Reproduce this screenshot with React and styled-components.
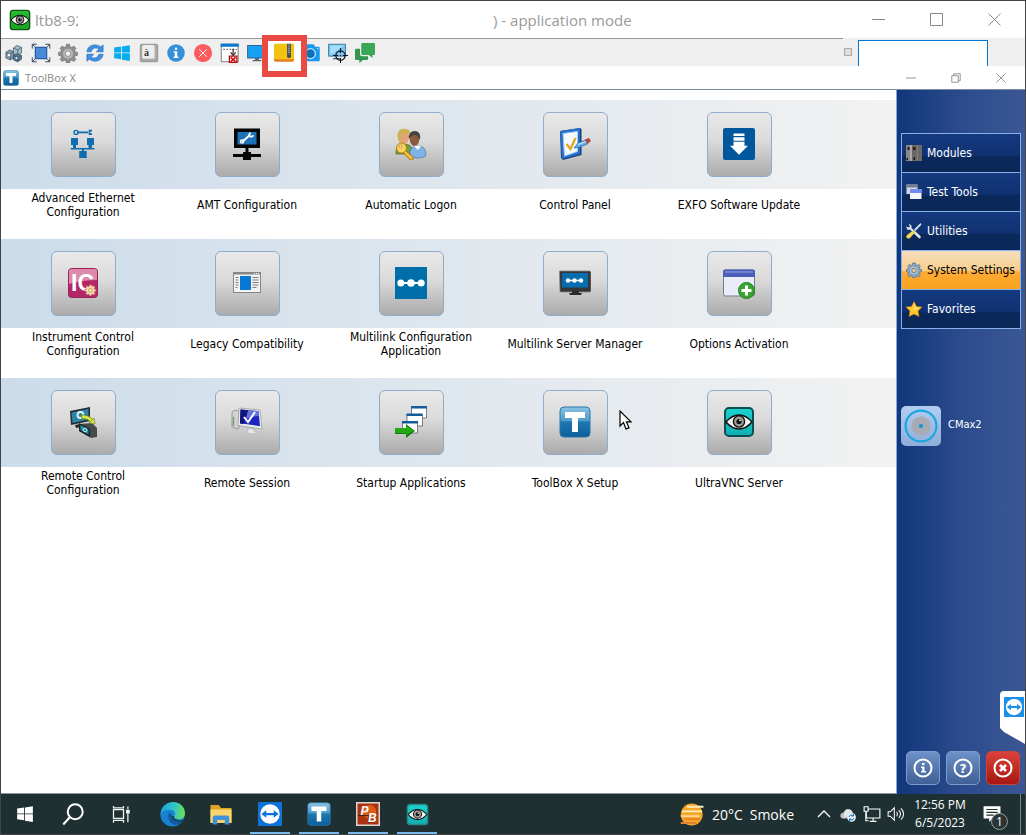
import { useId } from "react";
import styled, { createGlobalStyle, css } from "styled-components";

const GlobalStyle = createGlobalStyle`
  * {
    box-sizing: border-box;
  }

  body {
    margin: 0;
    background: #fff;
    font-family: "DejaVu Sans Condensed", "Noto Sans", sans-serif;
  }

  button {
    padding: 0;
    border: none;
    background: none;
    color: inherit;
    font: inherit;
    cursor: pointer;
  }

  svg {
    display: block;
    flex: none;
  }
`;

/* ---------- shared drawings ---------- */

function Svg({ size = 32, children, ...rest }) {
  return (
    <svg width={size} height={size} viewBox="0 0 32 32" fill="none" aria-hidden="true" {...rest}>
      {children}
    </svg>
  );
}

function EyeIcon({ size, from = "#19d3cf", to = "#12aeb0", edge = "#0c4f52" }) {
  const id = useId();
  return (
    <Svg size={size}>
      <linearGradient id={id} x1="0" y1="0" x2="0" y2="1">
        <stop offset="0" stopColor={from} />
        <stop offset="1" stopColor={to} />
      </linearGradient>
      <rect x="2" y="2" width="28" height="28" rx="4" fill={`url(#${id})`} stroke={edge} strokeWidth="2" />
      <path d="M3 16Q9 9 16 9t13 7q-6 7-13 7T3 16Z" fill="#f2f6f5" stroke="#111" strokeWidth="1.6" />
      <circle cx="16" cy="15.5" r="5.6" fill="#a29c9a" stroke="#111" strokeWidth="1.4" />
      <circle cx="16" cy="15.5" r="2.6" fill="#111" />
      <circle cx="17" cy="14.3" r=".9" fill="#fff" />
    </Svg>
  );
}

function ToolBoxIcon({ size }) {
  const id = useId();
  return (
    <Svg size={size}>
      <linearGradient id={id} x1="0" y1="0" x2="0" y2="1">
        <stop offset="0" stopColor="#8dc3e2" />
        <stop offset=".45" stopColor="#4b9bcb" />
        <stop offset=".5" stopColor="#1d77b0" />
        <stop offset="1" stopColor="#0c5f9b" />
      </linearGradient>
      <rect x="1" y="1" width="30" height="30" rx="4" fill={`url(#${id})`} stroke="#2a78ab" />
      <path d="M6 6h20v6h-7v14h-6V12H6Z" fill="#fff" />
    </Svg>
  );
}

function TeamViewerIcon({ size, color = "#0e72d8" }) {
  return (
    <Svg size={size}>
      <rect width="32" height="32" rx="1" fill={color} />
      <circle cx="16" cy="16" r="13" fill="#fff" />
      <path d="M4.500 16l6.500-5v3.500h10V11l6.500 5-6.500 5v-3.500H11V21Z" fill={color} />
    </Svg>
  );
}

function WindowsLogo({ size, color }) {
  return (
    <Svg size={size}>
      <path
        d="M2 6.300 14.500 4.500V15H2ZM16 4.300 30 2v13H16ZM2 16.600h12.500v10.600L2 25.500ZM16 16.600h14V30l-14-2.200Z"
        fill={color}
      />
    </Svg>
  );
}

const gearPath =
  "M13.500 2h5l.8 4 2.600 1.100L25.300 4.800l3.400 3.500-2.300 3.400 1.100 2.600 4 .8v4.300l-4 .9-1.100 2.500 2.300 3.400-3.400 3.500-3.400-2.300-2.600 1.100-.8 3.500h-5l-.8-3.500-2.600-1.100-3.400 2.300-3.400-3.500 2.300-3.400-1.100-2.500-4-.9v-4.300l4-.8 1.100-2.600-2.300-3.400 3.400-3.500 3.400 2.300L12.700 6Z";

/* ---------- viewer toolbar drawings ---------- */

const HostsIcon = () => (
  <Svg size={20}>
    <g stroke="#3b5263" strokeWidth="1.200">
      <path d="m3 15 6-4 7 3v9l-6 4-7-3Z" fill="#7f9bab" />
      <path d="m3 15 7 3 6-4M10 18v9" />
      <path d="m15 8 6-4 7 3v9l-6 4-7-3Z" fill="#a9c0cc" />
      <path d="m15 8 7 3 6-4M22 11v9" />
      <path d="m15 20 6-3 7 3v6l-6 4-7-3Z" fill="#53788f" />
      <path d="m15 20 7 3 6-3M22 23v7" />
    </g>
    <circle cx="8" cy="19" r="2" fill="#fff" />
    <circle cx="20" cy="24" r="1.800" fill="#d8edf8" />
  </Svg>
);

const FullScreenIcon = () => (
  <Svg size={20}>
    <rect x="7" y="7" width="18" height="18" fill="#4a8bd6" stroke="#2a5ca5" strokeWidth="2" />
    <path d="M2 9V2h7M23 2h7v7M30 23v7h-7M9 30H2v-7M2 2l4 4M30 2l-4 4M30 30l-4-4M2 30l4-4" stroke="#34475d" strokeWidth="1.600" />
  </Svg>
);

const OptionsGearIcon = () => (
  <Svg size={20}>
    <path d={gearPath} fill="#8d8f90" stroke="#636668" strokeWidth="1" />
    <circle cx="16" cy="17" r="8" fill="#b7b9ba" />
    <circle cx="16" cy="17" r="4.500" fill="#efefef" stroke="#676767" />
  </Svg>
);

const RefreshIcon = () => (
  <Svg size={20}>
    <path d="M3 14C4 7 9 3 16 3c4 0 7 1.500 9 3l4-3v11H18l4-4c-4-4-11-2-12 4Z" fill="#3e90e2" stroke="#2869b5" />
    <path d="M29 18c-1 7-6 11-13 11-4 0-7-1.500-9-3l-4 3V18h11l-4 4c4 4 11 2 12-4Z" fill="#3e90e2" stroke="#2869b5" />
  </Svg>
);

const KeyCapIcon = () => (
  <Svg size={20}>
    <rect x="2" y="2" width="28" height="28" rx="2" fill="#a9a9a9" stroke="#777" />
    <rect x="5" y="3" width="20" height="22" rx="3" fill="#ededed" />
    <text x="8" y="20" fontSize="16" fontWeight="700" fontFamily="Liberation Serif, serif" fill="#333">
      à
    </text>
  </Svg>
);

const StatusIcon = () => (
  <Svg size={20}>
    <circle cx="16" cy="16" r="14" fill="#3490d8" />
    <circle cx="16" cy="9" r="2" fill="#fff" />
    <path d="M12 13h6v9h2v2h-8v-2h2v-7h-2Z" fill="#fff" />
  </Svg>
);

const DisconnectIcon = () => (
  <Svg size={20}>
    <circle cx="16" cy="16" r="14.500" fill="#fd5c5e" />
    <path d="m10 10 12 12m0-12L10 22" stroke="#fff" strokeWidth="1.600" />
  </Svg>
);

const HideBarIcon = () => (
  <Svg size={20}>
    <rect x="2" y="2" width="27" height="28" fill="#fff" stroke="#777" strokeWidth="1.500" />
    <path d="M1 1h29v5H1Z" fill="#0878d0" />
    <path d="M5 10h22" stroke="#777" strokeWidth="2" strokeDasharray="3 2" />
    <path d="M21 9v8m-4-2 4 5 4-5" stroke="#333" strokeWidth="2" />
    <rect x="15" y="21" width="12" height="10" fill="#fff" stroke="#b30b0b" strokeWidth="2" />
    <path d="m17 23 8 7m0-7-8 7" stroke="#e00000" strokeWidth="2.500" />
  </Svg>
);

const MonitorIcon = () => (
  <Svg size={20}>
    <rect x="1" y="4" width="30" height="20" fill="#18a0f5" stroke="#28628e" strokeWidth="1.500" />
    <path d="M13 24h6v3h4v2H9v-2h4Z" fill="#59656e" />
  </Svg>
);

const ArchiveIcon = () => (
  <Svg size={20}>
    <rect x="0" y="2" width="32" height="28" rx="3" fill="#e97e1c" />
    <rect x="0" y="1" width="32" height="25" rx="3" fill="#f2c313" />
    <path d="M21 1h6v20a3 3 0 0 1-6 0Z" fill="#39495b" />
    <path d="M24 2v16" stroke="#b9c0c5" strokeWidth="2" strokeDasharray="2 1" />
  </Svg>
);

const CameraIcon = () => (
  <Svg size={20}>
    <path d="M3 6h5l2-4h10l3 4h5q2 0 2 2v19q0 2-2 2H3q-2 0-2-2V8q0-2 2-2Z" fill="#1699ee" />
    <circle cx="15" cy="17" r="9" fill="#bfe6ff" />
    <circle cx="15" cy="17" r="7" fill="#0872be" />
    <circle cx="27" cy="9" r="1" fill="#fff" />
  </Svg>
);

const TargetIcon = () => (
  <Svg size={20}>
    <rect x="1" y="2" width="27" height="19" fill="#77c5f2" stroke="#3e789e" strokeWidth="1.500" />
    <path d="M4 19 26 4H4Z" fill="#a8def9" />
    <path d="M9 24h10v2H7Z" fill="#4d5c66" />
    <circle cx="20" cy="20" r="7.500" stroke="#111" strokeWidth="1.800" />
    <path d="M20 8v8m0 8v8M8 20h8m8 0h8" stroke="#111" strokeWidth="1.800" />
    <circle cx="20" cy="20" r="1" fill="#111" />
  </Svg>
);

const ChatIcon = () => (
  <Svg size={20}>
    <path d="M12 0h18q2 0 2 2v15q0 2-2 2h-2v5l-6-5H12q-2 0-2-2V2q0-2 2-2Z" fill="#3aa757" />
    <path d="M2 9h6v9q0 3 4 3h9v4q0 2-2 2h-6l-6 5v-5H2q-2 0-2-2V11q0-2 2-2Z" fill="#33964e" />
  </Svg>
);

/* ---------- tile drawings ---------- */

const EthernetIcon = () => (
  <Svg>
    <g fill="#0f6db0">
      <path d="M10 3.500h11v1.800H10Z" />
      <path d="M4 10h7v7H9v3h12.500v-3h-1.500v-7h7v7h-2v3h2.500v1.500H17v1.500h2.700V30h-7.500v-7H15v-1.500H3.700V20H6v-3H4Z" />
    </g>
    <circle cx="9" cy="4.400" r="2" stroke="#0f6db0" strokeWidth="1.400" />
    <path d="M25 2.700h-2.500v3.400H25" stroke="#0f6db0" strokeWidth="1.700" />
  </Svg>
);

const AmtIcon = () => (
  <Svg>
    <path d="M3 .500h26V20H17.500v4H20v2h10v3H20v3h-8v-3H2v-3h10v-2h2.500v-4H3Z" fill="#050505" />
    <rect x="6.500" y="4" width="19" height="12.500" fill="#1c71b8" />
    <path d="m11 14 8-7" stroke="#fff" strokeWidth="2" />
    <circle cx="11" cy="13.500" r="1.600" stroke="#fff" strokeWidth="1.300" />
    <path d="M19.500 4.500 18 7l2 2 2.600-1.500" stroke="#fff" strokeWidth="1.600" />
  </Svg>
);

const LogonIcon = () => (
  <Svg>
    <path d="M1 24q0-8 8-8t9 7v3H1Z" fill="#6f9e45" stroke="#476b2c" strokeWidth=".700" />
    <ellipse cx="9" cy="9" rx="5" ry="7" fill="#e0a679" />
    <path d="M3 11C1 3 6 0 10 1c4-.500 6 3 5 5-4-2-8-1-9 1-1 5 0 8-1 8Z" fill="#cdb04f" />
    <path d="M15 28q-1-10 8-10 8 0 8 9-1 3-8 3t-8-2Z" fill="#80b4e7" stroke="#4477aa" strokeWidth=".700" />
    <path d="m19 18 4 4 3-4Z" fill="#fff" />
    <ellipse cx="19.500" cy="11" rx="4.800" ry="7" fill="#8b5c3d" />
    <path d="M14 11c-1-5 2-8 5.500-8 5 0 7 5 5 9-1-4-3-5-5-5s-3.500 1-5.500 4Z" fill="#45413d" />
    <path d="m10 22 8 7v3h-3l-1-2-2-1-4-5Z" fill="#f5c13c" stroke="#a77212" />
    <circle cx="6.500" cy="20" r="5" fill="#ffd45d" stroke="#bd7e14" />
    <circle cx="5.500" cy="18.500" r="1.600" fill="#e8e2cf" stroke="#bd7e14" strokeWidth=".700" />
  </Svg>
);

const ControlPanelIcon = () => (
  <Svg>
    <path d="m1 3 20-3 1.500 1v26L4 32l-2-2Z" fill="#173d79" />
    <path d="m1 3 20-3v26L3 31Z" fill="#286fc9" />
    <path d="m4 5.500 14.500-2v20L5.500 28Z" fill="#f4faff" stroke="#9ecafa" />
    <path d="m7.500 16 4 5 5-11" stroke="#e5a51d" strokeWidth="2.300" />
    <path d="m15 20 4-5 8-3 1.500 4-9 3.500Z" fill="#65aceb" stroke="#246ab2" strokeWidth=".800" />
    <path d="m26 11.500 4-1.500 2 3-3.500 3Z" fill="#b94739" />
    <path d="m19 16.500 8-3" stroke="#e1f3ff" />
  </Svg>
);

const UpdateIcon = () => (
  <Svg>
    <rect width="32" height="32" rx="2" fill="#00579c" />
    <path d="M10.500 5.500h11V8h-11Zm0 3.700h11v3.500h-11Zm0 4.600h11v4H25l-9 9-9-9h3.500Z" fill="#fff" />
  </Svg>
);

const InstrumentIcon = () => (
  <Svg>
    <rect x="1.500" y="1.500" width="29" height="29" rx="3" fill="#b32668" stroke="#9b2058" />
    <path d="M4 2h24q2 0 2 2v9Q15 13 2 17V4q0-2 2-2Z" fill="#dc89ad" />
    <text x="4" y="24" fontSize="23" fontWeight="700" fontFamily="Liberation Sans, sans-serif" fill="#fff">
      IC
    </text>
    <g transform="translate(17.500 17) scale(.37)">
      <path d={gearPath} fill="#f9dbb2" stroke="#a95b51" strokeWidth="1.500" />
      <circle cx="16" cy="17" r="5" fill="#fff3a3" stroke="#b57257" strokeWidth="2" />
    </g>
  </Svg>
);

const LegacyIcon = () => (
  <Svg>
    <rect x="2.500" y="5.500" width="27" height="20" fill="#f3f3f3" stroke="#858585" />
    <path d="M2 5h28v2.500H2Z" fill="#858585" />
    <path d="M23 6.400h1m1 0h1m1 0h1" stroke="#fff" />
    <rect x="9" y="9" width="11" height="14" fill="#0878d7" />
    <path d="M4.500 10.500h3m-3 2.500h3m-3 2.500h3m-3 2.500h3m-3 2.500h2M21.500 10.500h6m-6 2.500h6m-6 2.500h6m-6 2.500h6m-6 2.500h4" stroke="#7b7b7b" />
  </Svg>
);

const MultilinkIcon = () => (
  <Svg>
    <rect width="32" height="32" fill="#006ea8" />
    <path d="M5.500 16h21" stroke="#fff" strokeWidth="2" />
    <circle cx="5.800" cy="16" r="3.500" fill="#fff" />
    <circle cx="16" cy="16" r="3.800" fill="#fff" />
    <circle cx="26.200" cy="16" r="3.500" fill="#fff" />
  </Svg>
);

const ServerManagerIcon = () => (
  <Svg>
    <path d="M.500 4h30l1.500 1v19l-1 1H1Z" fill="#343638" stroke="#848789" strokeWidth=".800" />
    <rect x="3" y="6" width="26" height="14.500" fill="#086daf" />
    <path d="M8 13.500h15" stroke="#fff" strokeWidth="1.500" />
    <circle cx="9" cy="13.500" r="2.200" fill="#fff" />
    <circle cx="15.500" cy="13.500" r="2.200" fill="#fff" />
    <circle cx="22" cy="13.500" r="2.200" fill="#fff" />
    <path d="M13 24h7v2h3l-1 2H11l-1-2h3Z" fill="#292b2d" />
  </Svg>
);

const ActivationIcon = () => (
  <Svg>
    <rect x=".500" y="3" width="31" height="26" rx="2" fill="#e9ecf9" stroke="#777b91" />
    <path d="M2 2.500h28q2 0 2 2V10H0V4.500q0-2 2-2Z" fill="#485eb8" />
    <path d="M2 4h28v2H2Z" fill="#6f82d2" />
    <circle cx="23.500" cy="23.500" r="8" fill="#36a72c" stroke="#227d20" />
    <path d="M23.500 18.500v10m-5-5h10" stroke="#fff" strokeWidth="3" />
  </Svg>
);

const RemoteControlIcon = () => (
  <Svg>
    <path d="m3 5 20-4v14L4 19Z" fill="#252a2e" />
    <path d="m4.500 6.500 17-3.700v11L5.500 17Z" fill="#2d83a8" />
    <path d="m8 19 5-1 2 3-6 1Z" fill="#25292c" />
    <circle cx="13.500" cy="9" r="3" stroke="#e6f2f4" strokeWidth="1.800" />
    <path d="m12 18 13-1 5 5v9l-6 1-12-7Z" fill="#45494a" />
    <path d="m12 17 11 6v8l-11-6Z" fill="#152329" />
    <path d="m13.500 19 8 4.500v5l-8-4.500Z" fill="#258ea8" />
    <circle cx="18" cy="24" r="1.800" stroke="#c9edf0" />
    <path d="M14 9q9-1 13 7l-3 1q-3-5-9-4Z" fill="#dfe440" stroke="#547e22" strokeWidth=".800" />
    <path d="m27 12 1 6-6-1Z" fill="#dfe440" stroke="#547e22" strokeWidth=".600" />
  </Svg>
);

const RemoteSessionIcon = () => (
  <Svg>
    <path d="m1 6 3-2 4 1v17l-2 1-5-2Z" fill="#cfd3d3" stroke="#868b8d" strokeWidth=".800" />
    <path d="M2.500 11v9" stroke="#7da45c" strokeWidth="1.500" />
    <path d="m8 2 21 2 2 19-24-3.500Z" fill="#ededed" stroke="#aaa" />
    <path d="m9.500 3.500 18 1.700 1.500 15-20-3Z" fill="#1d25c0" />
    <path d="m9.500 3.500 8 .7-5 13.800-3.500-.600Z" fill="#101578" />
    <path d="M17 4.200 27.500 5 28 10q-7 0-13 3Z" fill="#6471df" />
    <path d="m13 11 4 5 7-10" stroke="#fff" strokeWidth="2" />
    <path d="m17 22 6 1v2q5 1 4 2-5 2-12 0-1-1 2-2Z" fill="#e5e5e5" stroke="#aaa" strokeWidth=".600" />
  </Svg>
);

const StartupIcon = () => (
  <Svg>
    <g fill="#fff" stroke="#65717b" strokeWidth=".900">
      <path d="M16.500 1h15v11h-15Z" />
      <path d="M12 8.500h15.500v11.500H12Z" />
      <path d="M7.500 16h15v11h-15Z" />
    </g>
    <path d="M16 0h16v2.500H16ZM11.500 7.500h16V10h-16ZM7 15h16v2.500H7Z" fill="#155a9b" />
    <path d="M0 22h11v-4l9 7-9 7v-4H0Z" fill="#117c0b" />
    <path d="M0 22h11v-3l8 6-8 4v-2H0Z" fill="#24a812" />
  </Svg>
);

/* ---------- side panel drawings ---------- */

const ModulesIcon = () => (
  <Svg size={16}>
    <rect width="32" height="32" fill="#6a6867" />
    <path d="M0 0h9v32H0Z" fill="#8b8988" />
    <path d="M10 0v32" stroke="#e5e5e5" strokeWidth="2" />
    <path d="M23 0v32" stroke="#8d8b8a" strokeWidth="1.500" />
    <path d="M3 4h4v6H3Zm11 0h5v6h-5Zm1 20h3v6h-3ZM1 26h3v4H1Z" fill="#1e1d1d" />
  </Svg>
);

const TestToolsIcon = () => (
  <Svg size={16}>
    <rect x="1" y="1" width="22" height="19" fill="#d5d7df" />
    <path d="M1 1h22v6H1Z" fill="#737b8c" />
    <rect x="8" y="10" width="23" height="20" fill="#f4f5fb" />
    <path d="M8 10h23v8H8Z" fill="#718af0" />
  </Svg>
);

const UtilitiesIcon = () => (
  <Svg size={16}>
    <path d="m5 1 6 4v5l17 15q3 3 1 5t-5-1L8 13l-5 1-3-7 5 2 3-2Z" fill="#dce3e8" />
    <path d="M29 0 16 13l3 3L31 3Z" fill="#d7dfe8" />
    <path d="m14 15 4 4L8 30q-3 2-6 0t0-6Z" fill="#f1d451" />
  </Svg>
);

const SettingsIcon = () => (
  <Svg size={16}>
    <path d={gearPath} fill="#8ba7c5" stroke="#506f92" strokeWidth="1.500" />
    <circle cx="16" cy="17" r="8" fill="#c6d3e1" stroke="#6d8baa" />
    <circle cx="16" cy="17" r="4.500" fill="#f3c98a" stroke="#5f7b99" strokeWidth="2" />
  </Svg>
);

const FavoritesIcon = () => (
  <Svg size={16}>
    <path d="m16 1 5 10 11 1-8 8 2 11-10-5-10 5 2-11-8-8 11-1Z" fill="#ffc52b" stroke="#d88208" />
    <path d="m16 4 4 9 8 1-12 4Z" fill="#ffe66f" />
  </Svg>
);

const CMaxIcon = () => (
  <Svg size={34}>
    <circle cx="16" cy="16" r="14.500" stroke="#18a8dc" strokeWidth="2" />
    <circle cx="16" cy="16" r="9" fill="#a6abb4" />
    <circle cx="16" cy="16" r="2" fill="#1599cc" />
  </Svg>
);

/* ---------- taskbar drawings ---------- */

const SearchIcon = () => (
  <Svg size={24}>
    <circle cx="19" cy="13" r="10" stroke="#fff" strokeWidth="2.600" />
    <path d="M12 20 3 30" stroke="#fff" strokeWidth="2.800" />
  </Svg>
);

const TaskViewIcon = () => (
  <Svg size={20}>
    <g stroke="#f1f4f4" strokeWidth="2">
      <path d="M4 9h16v14H4ZM4 3v3h16V3M4 30v-4h16v4M27 4v4m0 7v14" />
      <path d="M25 10h4v4h-4Z" fill="#fff" />
    </g>
  </Svg>
);

function EdgeIcon() {
  const id = useId();
  return (
    <Svg size={25}>
      <linearGradient id={id} x1="0" y1=".3" x2="1" y2=".4">
        <stop offset="0" stopColor="#1ba5df" />
        <stop offset=".6" stopColor="#35c7bd" />
        <stop offset="1" stopColor="#70df55" />
      </linearGradient>
      <circle cx="16" cy="16" r="15.500" fill="#1583d0" />
      <path d="M1 15C2 5 9 0 17 0c9 0 15 7 15 14 0 6-4 8-8 8-5 0-7-2-6-4 4-5-2-9-7-8-4 0-8 2-10 5Z" fill={`url(#${id})`} />
      <path d="M12 13c-3 5-1 14 7 16 5 1 9-2 11-5-7 3-13 1-14-6Z" fill="#1458a0" />
      <path d="M18 18c-1 4 4 7 12 5l-1 2c-7 1-13-1-13-7Z" fill="#1d3031" />
    </Svg>
  );
}

const FolderIcon = () => (
  <Svg size={24}>
    <path d="M2 4h11l3 4h14v20H2Z" fill="#dba525" />
    <path d="M2 10h28v18H2Z" fill="#f9d66d" />
    <path d="M8 18h16q3 0 3 3v9h-6v-6H11v6H5v-9q0-3 3-3Z" fill="#4291d8" />
  </Svg>
);

const PbIcon = () => (
  <Svg size={24}>
    <rect x="1" y="1" width="30" height="30" fill="#a83510" stroke="#ded7d1" strokeWidth="2" />
    <circle cx="18" cy="13" r="9" fill="#df5c17" />
    <path d="M3 18h14v10" stroke="#291611" />
    <g fontFamily="Liberation Sans, sans-serif" fontWeight="700" fontStyle="italic" fill="#fff" fontSize="16">
      <text x="6" y="17">P</text>
      <text x="16" y="26">B</text>
    </g>
  </Svg>
);

const SmokeIcon = () => (
  <Svg size={25}>
    <circle cx="15" cy="16" r="14" fill="#f4a727" />
    <path d="M9 6h21M3 12h25" stroke="#ffefc4" strokeWidth="2.500" />
    <path d="M1 18h24" stroke="#ffd391" strokeWidth="2.500" />
    <path d="M6 22h20M1 27h20" stroke="#e5812c" strokeWidth="2.500" />
  </Svg>
);

const CloudIcon = () => (
  <Svg size={16}>
    <path d="M4 25q-5-3-3-8t7-4q3-8 11-6 6 2 6 7 5 0 6 5v6Z" fill="#b8bdbd" />
    <path d="M8 13q3-8 11-6 6 2 6 7L7 25Z" fill="#e5e7e7" />
    <circle cx="23" cy="23" r="8.500" fill="#f4f7fa" />
    <path d="M18 22q1-5 6-4l3 2m1 4q-1 5-6 4l-3-2M27 16v4h-4m-4 10v-4h4" stroke="#126ebb" strokeWidth="2" />
  </Svg>
);

const NetworkIcon = () => (
  <Svg size={18}>
    <path d="M9 7h21v16H6V13M18 23v5m-6 1h12M2 3h7v8H2ZM5 11v17h5" stroke="#fff" strokeWidth="2" />
  </Svg>
);

const SoundIcon = () => (
  <Svg size={18}>
    <path d="M2 12h4l7-7v22l-7-7H2Z" stroke="#fff" strokeWidth="1.800" />
    <path d="M17 12q3 4 0 8M21 9q6 7 0 14M25 6q9 10 0 20" stroke="#fff" strokeWidth="1.800" />
  </Svg>
);

const NoticeIcon = () => (
  <Svg size={18}>
    <path d="M1 2h30v22H17l-6 6v-6H1Z" fill="#fff" />
    <path d="M6 8h20M6 13h20M6 18h13" stroke="#203031" strokeWidth="2" />
  </Svg>
);

/* ---------- data ---------- */

const toolbarItems = [
  { label: "Hosts", icon: <HostsIcon /> },
  { label: "Full screen", icon: <FullScreenIcon /> },
  { label: "Options", icon: <OptionsGearIcon /> },
  { label: "Refresh", icon: <RefreshIcon /> },
  { label: "Start menu", icon: <WindowsLogo size={18} color="#08adef" /> },
  { label: "Custom key", icon: <KeyCapIcon /> },
  { label: "Status", icon: <StatusIcon /> },
  { label: "Disconnect", icon: <DisconnectIcon /> },
  { label: "Hide toolbar", icon: <HideBarIcon /> },
  { label: "Select screen", icon: <MonitorIcon /> },
  { label: "File transfer", icon: <ArchiveIcon />, highlighted: true },
  { label: "Capture", icon: <CameraIcon /> },
  { label: "Select window", icon: <TargetIcon /> },
  { label: "Chat", icon: <ChatIcon /> },
];

const tileRows = [
  [
    { label: "Advanced Ethernet Configuration", icon: <EthernetIcon /> },
    { label: "AMT Configuration", icon: <AmtIcon /> },
    { label: "Automatic Logon", icon: <LogonIcon /> },
    { label: "Control Panel", icon: <ControlPanelIcon /> },
    { label: "EXFO Software Update", icon: <UpdateIcon /> },
  ],
  [
    { label: "Instrument Control Configuration", icon: <InstrumentIcon /> },
    { label: "Legacy Compatibility", icon: <LegacyIcon /> },
    { label: "Multilink Configuration Application", icon: <MultilinkIcon /> },
    { label: "Multilink Server Manager", icon: <ServerManagerIcon /> },
    { label: "Options Activation", icon: <ActivationIcon /> },
  ],
  [
    { label: "Remote Control Configuration", icon: <RemoteControlIcon /> },
    { label: "Remote Session", icon: <RemoteSessionIcon /> },
    { label: "Startup Applications", icon: <StartupIcon /> },
    { label: "ToolBox X Setup", icon: <ToolBoxIcon />, pointed: true },
    { label: "UltraVNC Server", icon: <EyeIcon /> },
  ],
];

const categories = [
  { label: "Modules", icon: <ModulesIcon /> },
  { label: "Test Tools", icon: <TestToolsIcon /> },
  { label: "Utilities", icon: <UtilitiesIcon /> },
  { label: "System Settings", icon: <SettingsIcon />, active: true },
  { label: "Favorites", icon: <FavoritesIcon /> },
];

const apps = [
  { label: "Edge", icon: <EdgeIcon /> },
  { label: "File Explorer", icon: <FolderIcon /> },
  { label: "TeamViewer", icon: <TeamViewerIcon size={24} />, running: true },
  { label: "ToolBox X", icon: <ToolBoxIcon size={24} />, running: true },
  { label: "PB", icon: <PbIcon />, running: true },
  { label: "UltraVNC", icon: <EyeIcon size={23} edge="#27898a" />, running: true },
];

export default function App() {
  return (
    <>
      <GlobalStyle />
      <Window>
        <TitleBar>
          <EyeIcon size={22} from="#29bd31" to="#16a51f" edge="#0c5512" />
          <HostName>ltb8-92</HostName>
          <ModeName>) - application mode</ModeName>
          <WindowButtons />
        </TitleBar>

        <ViewerBar>
          <Tools>
            {toolbarItems.map((item) => (
              <ToolButton key={item.label} aria-label={item.label} $highlighted={item.highlighted}>
                {item.icon}
              </ToolButton>
            ))}
          </Tools>
          <StatusLight />
          <StatusGraph />
        </ViewerBar>

        <AppBar>
          <ToolBoxIcon size={16} />
          <AppName>ToolBox X</AppName>
          <WindowButtons small />
        </AppBar>

        <Body>
          <Content>
            {tileRows.map((row) => (
              <TileRow key={row[0].label}>
                {row.map((tile) => (
                  <Tile key={tile.label}>
                    <TileFace aria-label={tile.label}>{tile.icon}</TileFace>
                    <TileLabel>{tile.label}</TileLabel>
                    {tile.pointed && (
                      <Pointer width="13" height="21" viewBox="0 0 13 21" aria-hidden="true">
                        <path
                          d="M1 1v15l3.500-3.400L7 19l3-1.200-2.600-6H12Z"
                          fill="#fff"
                          stroke="#000"
                          strokeWidth="1.200"
                        />
                      </Pointer>
                    )}
                  </Tile>
                ))}
              </TileRow>
            ))}
          </Content>

          <SidePanel>
            <Categories>
              {categories.map((category) => (
                <Category key={category.label} $active={category.active}>
                  {category.icon}
                  {category.label}
                </Category>
              ))}
            </Categories>

            <Shortcut>
              <ShortcutFace>
                <CMaxIcon />
              </ShortcutFace>
              <ShortcutName>CMax2</ShortcutName>
            </Shortcut>

            <SupportTab aria-label="TeamViewer">
              <TeamViewerIcon size={20} color="#1b8fe8" />
            </SupportTab>

            <PanelActions>
              <RoundAction aria-label="Information">
                <svg width="20" height="20" viewBox="0 0 20 20" fill="none">
                  <circle cx="10" cy="10" r="8.500" stroke="#fff" strokeWidth="2" />
                  <path d="M9 5h2.500v2H9ZM8 8.500h3.500V13H13v1.500H8V13h1.200v-3H8Z" fill="#fff" />
                </svg>
              </RoundAction>
              <RoundAction aria-label="Help">
                <svg width="20" height="20" viewBox="0 0 20 20" fill="none">
                  <circle cx="10" cy="10" r="8.500" stroke="#fff" strokeWidth="2" />
                  <text x="10" y="14.500" textAnchor="middle" fontSize="12" fontWeight="700" fill="#fff" fontFamily="DejaVu Sans, sans-serif">
                    ?
                  </text>
                </svg>
              </RoundAction>
              <RoundAction aria-label="Exit" $danger>
                <svg width="20" height="20" viewBox="0 0 20 20" fill="none">
                  <circle cx="10" cy="10" r="8.500" stroke="#fff" strokeWidth="2" />
                  <path d="m7 7 6 6m0-6-6 6" stroke="#fff" strokeWidth="2.600" />
                </svg>
              </RoundAction>
            </PanelActions>
          </SidePanel>
        </Body>

        <Taskbar>
          <SystemButton aria-label="Start">
            <WindowsLogo size={18} color="#fff" />
          </SystemButton>
          <SystemButton aria-label="Search">
            <SearchIcon />
          </SystemButton>
          <SystemButton aria-label="Task view">
            <TaskViewIcon />
          </SystemButton>
          <Apps>
            {apps.map((app) => (
              <AppButton key={app.label} aria-label={app.label} $running={app.running}>
                {app.icon}
              </AppButton>
            ))}
          </Apps>

          <Weather>
            <SmokeIcon />
            <span>20°C</span>
            <span>Smoke</span>
          </Weather>
          <Tray>
            <TrayButton aria-label="Show hidden icons">
              <svg width="14" height="14" viewBox="0 0 14 14" fill="none">
                <path d="m1 10 6-6 6 6" stroke="#fff" strokeWidth="1.300" />
              </svg>
            </TrayButton>
            <TrayButton aria-label="Cloud sync">
              <CloudIcon />
            </TrayButton>
            <TrayButton aria-label="Network">
              <NetworkIcon />
            </TrayButton>
            <TrayButton aria-label="Volume">
              <SoundIcon />
            </TrayButton>
          </Tray>
          <Clock>
            <span>12:56 PM</span>
            <span>6/5/2023</span>
          </Clock>
          <Notifications aria-label="Notifications">
            <NoticeIcon />
            <Badge>1</Badge>
          </Notifications>
          <ShowDesktop aria-label="Show desktop" />
        </Taskbar>
      </Window>
    </>
  );
}

function WindowButtons({ small }) {
  const size = small ? 10 : 13;
  return (
    <WindowControls>
      <WindowButton aria-label="Minimize" $small={small}>
        <svg width={size} height={size} viewBox="0 0 13 13" fill="none" stroke="currentColor">
          <path d="M0 6.500h13" />
        </svg>
      </WindowButton>
      <WindowButton aria-label={small ? "Restore" : "Maximize"} $small={small}>
        <svg width={size} height={size} viewBox="0 0 13 13" fill="none" stroke="currentColor">
          {small ? <path d="M1 3.500h8.500V12H1ZM3.500 3V1H12v9H10" /> : <path d="M.500.500h12v12H.500Z" />}
        </svg>
      </WindowButton>
      <WindowButton aria-label="Close" $small={small}>
        <svg width={size} height={size} viewBox="0 0 13 13" fill="none" stroke="currentColor">
          <path d="m.500.500 12 12m0-12-12 12" />
        </svg>
      </WindowButton>
    </WindowControls>
  );
}

/* ---------- styles ---------- */

const Window = styled.div`
  display: flex;
  flex-direction: column;
  min-height: 100vh;
  border: 1px solid #444;
`;

const TitleBar = styled.header`
  display: flex;
  align-items: center;
  height: 37px;
  padding-left: 8px;
  color: #999;
  font-family: "Open Sans", sans-serif;
  font-size: 15px;
`;

const HostName = styled.span`
  width: 43px;
  margin-left: 4px;
  overflow: hidden;
  white-space: nowrap;
`;

const ModeName = styled.span`
  margin-left: 415px;
  white-space: nowrap;
`;

const WindowControls = styled.div`
  display: flex;
  align-self: stretch;
  margin-left: auto;
  padding-right: 2px;
`;

const WindowButton = styled.button`
  display: flex;
  align-items: center;
  justify-content: center;
  width: ${({ $small }) => ($small ? "45px" : "58px")};
  color: ${({ $small }) => ($small ? "#777" : "#888")};
`;

const ViewerBar = styled.div`
  display: flex;
  align-items: center;
  height: 28px;
  background-color: #efefef;
`;

const Tools = styled.div`
  display: flex;
  flex: 1;
  border-top: 1px solid #999;
`;

const ToolButton = styled.button`
  display: flex;
  align-items: center;
  justify-content: center;
  width: 27px;
  height: 27px;
  padding-right: 1px;

  ${({ $highlighted }) =>
    $highlighted &&
    css`
      position: relative;
      z-index: 1;

      &::before {
        content: "";
        position: absolute;
        z-index: -1;
        inset: -4px -9px -11px;
        border: 6px solid #e94b43;
        background-color: #fff;
      }
    `}
`;

const StatusLight = styled.span`
  width: 8px;
  height: 8px;
  margin-left: 1px;
  border: 1px solid #aaa;
  background-color: #ddd;
`;

const StatusGraph = styled.div`
  align-self: stretch;
  width: 130px;
  margin: 2px 37px 0 6px;
  border: 1px solid #0078d7;
  border-bottom: none;
  background-color: #fff;
`;

const AppBar = styled.header`
  display: flex;
  align-items: center;
  height: 24px;
  padding-left: 2px;
  border-bottom: 1px solid #7c8b9c;
  background-color: #fff;
`;

const AppName = styled.span`
  margin-left: 6px;
  color: #888;
  font-family: "Open Sans", sans-serif;
  font-size: 11px;
`;

const Body = styled.div`
  display: flex;
  flex: 1;
`;

const Content = styled.main`
  flex: 1;
  padding-top: 10px;
  border-bottom: 1px solid #8a99a8;
`;

const TileRow = styled.section`
  display: flex;
  height: 139px;
  background: linear-gradient(90deg, #ccdcea, #f2f2f2) top / 100% 89px no-repeat;
`;

const Tile = styled.div`
  position: relative;
  display: flex;
  flex-direction: column;
  align-items: center;
  width: 164px;
  padding-top: 12px;
`;

const TileFace = styled.button`
  display: flex;
  align-items: center;
  justify-content: center;
  width: 65px;
  height: 65px;
  padding: 0 1px 1px 0;
  border: 1px solid #8faccb;
  border-radius: 6px;
  background: linear-gradient(#e9e9e9, #dadada 45%, #ababab);
`;

const TileLabel = styled.span`
  display: flex;
  align-items: center;
  justify-content: center;
  width: 144px;
  height: 32px;
  margin-top: 12px;
  color: #000;
  font-size: 12px;
  line-height: 14px;
  text-align: center;
`;

const Pointer = styled.svg`
  position: absolute;
  top: 32px;
  left: 126px;
`;

const SidePanel = styled.aside`
  display: flex;
  flex-direction: column;
  width: 129px;
  padding: 43px 4px 9px;
  border-left: 1px solid #86a9d8;
  background: linear-gradient(90deg, #10377b, #2c4b8d 50%, #3b5794);
  color: #fff;
`;

const Categories = styled.nav`
  display: flex;
  flex-direction: column;
  gap: 1px;
  border: 1px solid #86b1ea;
  background-color: #86b1ea;
`;

const Category = styled.button`
  display: flex;
  align-items: center;
  gap: 5px;
  height: 38px;
  padding-left: 4px;
  background: ${({ $active }) =>
    $active
      ? "linear-gradient(#f5dfbd, #f8cf8f 50%, #ffab34 55%, #f9a21f)"
      : "linear-gradient(#14397f, #103272 55%, #0b285b 60%, #0b2758)"};
  color: ${({ $active }) => ($active ? "#000" : "#fff")};
  font-size: 12px;
  white-space: nowrap;
`;

const Shortcut = styled.button`
  display: flex;
  align-items: center;
  gap: 7px;
  margin-top: 77px;
  font-size: 11px;
`;

const ShortcutFace = styled.span`
  display: flex;
  align-items: center;
  justify-content: center;
  width: 40px;
  height: 40px;
  border-radius: 5px;
  background: linear-gradient(#b3cdf2, #8fadd9);
`;

const ShortcutName = styled.span`
  padding-bottom: 4px;
`;

const SupportTab = styled.button`
  align-self: flex-end;
  width: 25px;
  height: 53px;
  margin: auto -4px 7px 0;
  padding: 6px 0 0 4px;
  display: flex;
  border-radius: 4px 0 0 0;
  background-color: #fff;
  clip-path: polygon(0 0, 100% 0, 100% 100%, 4px 41px, 0 37px);
`;

const PanelActions = styled.div`
  display: flex;
  gap: 6px;
  padding-left: 5px;
`;

const RoundAction = styled.button`
  display: flex;
  flex: none;
  align-items: center;
  justify-content: center;
  width: 34px;
  height: 34px;
  border: 1px solid ${({ $danger }) => ($danger ? "#c6463f" : "#7d9bcb")};
  border-radius: 5px;
  background: ${({ $danger }) =>
    $danger ? "linear-gradient(#da433b, #a81712)" : "linear-gradient(#6d90c8, #3f6096)"};
`;

const Taskbar = styled.footer`
  display: flex;
  align-items: stretch;
  height: 40px;
  background-color: #1e3031;
  color: #fff;
  font-family: "Open Sans", sans-serif;
`;

const SystemButton = styled.button`
  display: flex;
  align-items: center;
  justify-content: center;
  width: 48px;
`;

const Apps = styled.div`
  display: flex;
  gap: 9px;
  margin-left: 7px;
`;

const AppButton = styled.button`
  display: flex;
  align-items: center;
  justify-content: center;
  width: 40px;
  border-top: 2px solid transparent;
  border-bottom: 2px solid ${({ $running }) => ($running ? "#76b9ed" : "transparent")};
`;

const Weather = styled.button`
  display: flex;
  align-items: center;
  gap: 7px;
  margin-left: auto;
  font-size: 14px;
`;

const Tray = styled.div`
  display: flex;
  margin-left: 18px;
`;

const TrayButton = styled.button`
  display: flex;
  align-items: center;
  justify-content: center;
  width: 24px;
`;

const Clock = styled.time`
  display: flex;
  flex-direction: column;
  align-items: center;
  justify-content: center;
  width: 64px;
  font-size: 12px;
  line-height: 18px;
  white-space: nowrap;
`;

const Notifications = styled.button`
  position: relative;
  display: flex;
  align-items: center;
  justify-content: center;
  width: 40px;
`;

const Badge = styled.span`
  position: absolute;
  right: 4px;
  bottom: 4px;
  width: 17px;
  height: 17px;
  border: 1px solid #9aa2a2;
  border-radius: 50%;
  background-color: #2c3536;
  font-size: 12px;
  line-height: 15px;
  text-align: center;
`;

const ShowDesktop = styled.button`
  width: 5px;
  margin-left: 8px;
  border-left: 1px solid #79878a;
`;
